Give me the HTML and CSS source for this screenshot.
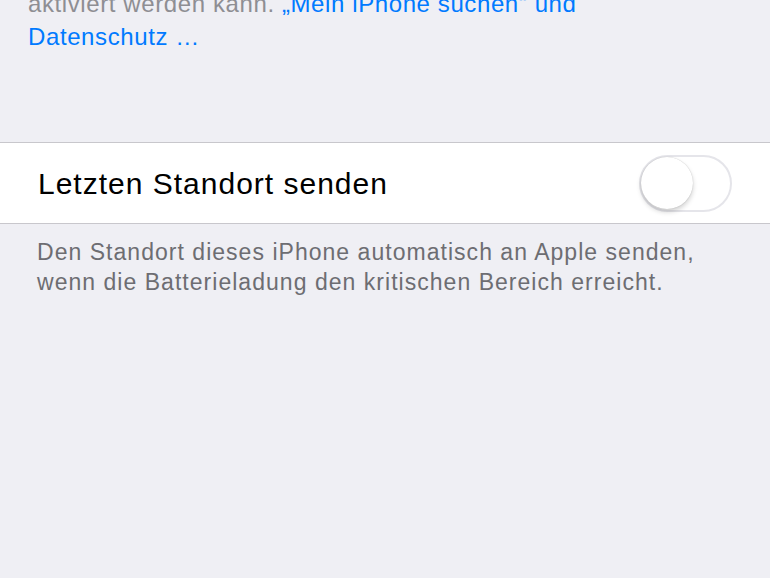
FILE: index.html
```html
<!DOCTYPE html>
<html lang="de">
<head>
<meta charset="utf-8">
<title>Letzten Standort senden</title>
<link rel="stylesheet" href="styles.css">
</head>
<body>
<div class="screen">
  <p class="note">aktiviert werden kann. <a class="link" href="#">„Mein iPhone suchen“ und<br>Datenschutz …</a></p>
  <div class="group">
    <div class="cell">
      <span class="label">Letzten Standort senden</span>
      <span class="switch"><span class="knob"></span></span>
    </div>
  </div>
  <p class="footer">Den Standort dieses iPhone automatisch an Apple senden,<br>wenn die Batterieladung den kritischen Bereich erreicht.</p>
</div>
</body>
</html>
```
FILE: styles.css
```css
html, body {
  margin: 0;
  padding: 0;
  background: #efeff4;
}
.screen {
  font-family: "Liberation Sans", Arial, sans-serif;
  width: 770px;
  height: 578px;
  overflow: hidden;
}
.note {
  margin: -13px 0 0 0;
  padding: 0 28px;
  font-size: 24px;
  line-height: 33px;
  color: #8e8e93;
  letter-spacing: 0.6px;
  height: 155px;
}
.link {
  color: #007aff;
  text-decoration: none;
}
.group {
  background: #fff;
  border-top: 1px solid #c8c7cc;
  border-bottom: 1px solid #c8c7cc;
}
.cell {
  height: 80px;
  display: flex;
  align-items: center;
  justify-content: space-between;
  padding: 0 38px 0 38px;
}
.label {
  font-size: 30px;
  letter-spacing: 1px;
  color: #000;
  padding-top: 2px;
}
.switch {
  box-sizing: border-box;
  width: 93px;
  height: 57px;
  border: 2px solid #e5e5ea;
  border-radius: 29px;
  background: #fff;
  display: flex;
  align-items: center;
}
.knob {
  width: 52px;
  height: 52px;
  border-radius: 50%;
  background: #fff;
  box-shadow: 0 3px 5px rgba(0,0,0,0.18), 0 0 1px rgba(0,0,0,0.25);
}
.footer {
  margin: 0;
  padding: 13px 38px 0 37px;
  font-size: 23px;
  line-height: 30px;
  color: #6d6d72;
  letter-spacing: 1.03px;
}
```
